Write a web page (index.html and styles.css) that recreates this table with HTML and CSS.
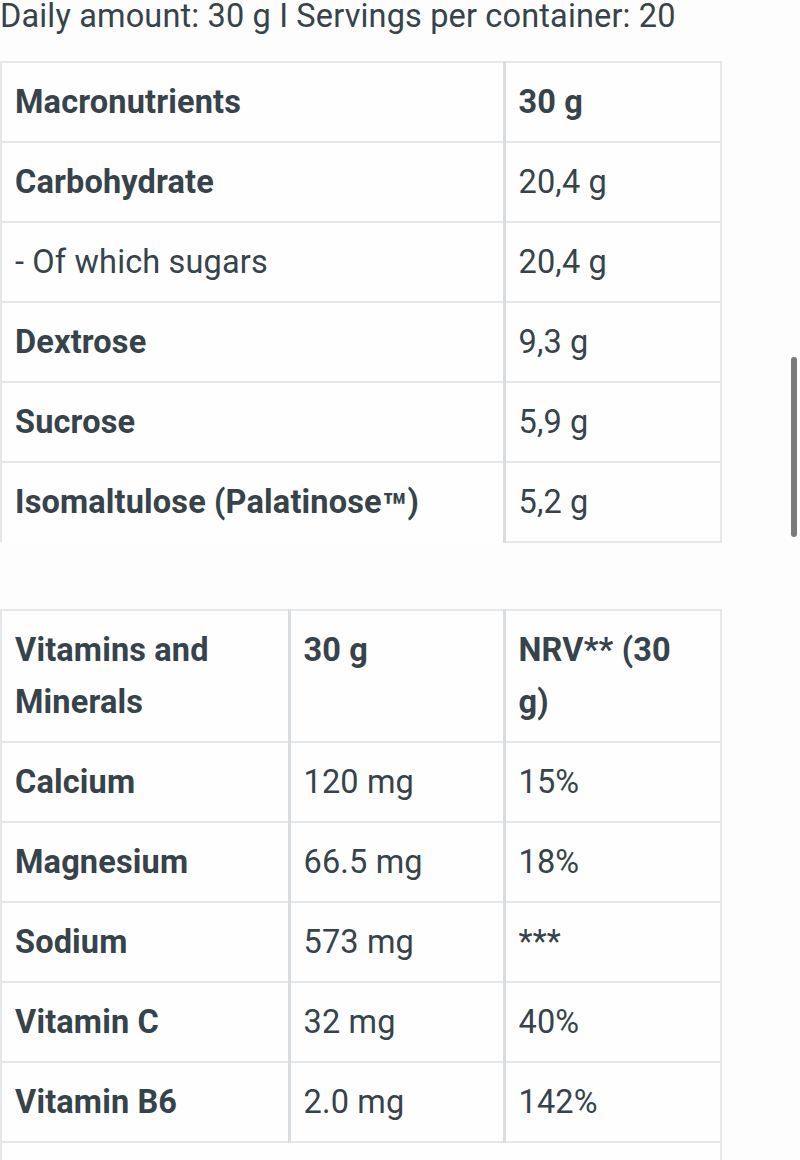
FILE: index.html
```html
<!DOCTYPE html>
<html>
<head>
<meta charset="utf-8">
<link rel="stylesheet" href="styles.css">
</head>
<body>
<p class="intro">Daily amount: 30 g I Servings per container: 20</p>
<table class="nt nt-macro">
  <colgroup><col class="c-wide"><col class="c-val"></colgroup>
  <tr><th>Macronutrients</th><th>30 g</th></tr>
  <tr><th>Carbohydrate</th><td>20,4 g</td></tr>
  <tr><td>- Of which sugars</td><td>20,4 g</td></tr>
  <tr><th>Dextrose</th><td>9,3 g</td></tr>
  <tr><th>Sucrose</th><td>5,9 g</td></tr>
  <tr class="last"><th>Isomaltulose (Palatinose<span class="tm">™</span>)</th><td>5,2 g</td></tr>
</table>
<table class="nt nt-vit">
  <colgroup><col class="c-name"><col class="c-mid"><col class="c-val"></colgroup>
  <tr><th>Vitamins and Minerals</th><th>30 g</th><th>NRV** (30 g)</th></tr>
  <tr><th>Calcium</th><td>120 mg</td><td>15%</td></tr>
  <tr><th>Magnesium</th><td>66.5 mg</td><td>18%</td></tr>
  <tr><th>Sodium</th><td>573 mg</td><td>***</td></tr>
  <tr><th>Vitamin C</th><td>32 mg</td><td>40%</td></tr>
  <tr><th>Vitamin B6</th><td>2.0 mg</td><td>142%</td></tr>
  <tr class="foot"><td colspan="3">&nbsp;</td></tr>
</table>
<div class="scrollbar"></div>
</body>
</html>
```
FILE: styles.css
```css
html, body {
  margin: 0;
  padding: 0;
  background: #fdfdfd;
  overflow: hidden;
}
body {
  font-family: Roboto, "Noto Sans", sans-serif;
  color: #37434b;
  font-size: 32.5px;
  letter-spacing: 0.15px;
}
.intro {
  margin: 0 0 29px 0;
  line-height: 32px;
  white-space: nowrap;
}
.nt {
  width: 720px;
  border-collapse: collapse;
  table-layout: fixed;
  background: #fefefe;
}
.nt th, .nt td {
  border: 2px solid #e6e7e8;
  padding: 13px 13px;
  line-height: 52px;
  text-align: left;
  vertical-align: top;
  font-weight: 400;
}
.nt th {
  font-weight: 700;
}
.tm {
  font-size: 1.25em;
  line-height: 0;
  vertical-align: -0.22em;
}
.nt td:last-child, .nt th:last-child {
  border-left: 3px solid #dadddf;
}
.nt-vit td:nth-child(2), .nt-vit th:nth-child(2) {
  border-left: 3px solid #dadddf;
}
.nt-vit .foot td {
  border-left: 2px solid #e6e7e8;
}
.c-wide { width: 503px; }
.c-val { width: 217px; }
.c-name { width: 288px; }
.c-mid { width: 215px; }
.nt-macro .last th {
  border-bottom: none;
}
.nt-vit {
  margin-top: 66px;
}
.scrollbar {
  position: fixed;
  left: 791px;
  top: 357px;
  width: 6px;
  height: 180px;
  border-radius: 3px;
  background: #7a7a7a;
}
```
